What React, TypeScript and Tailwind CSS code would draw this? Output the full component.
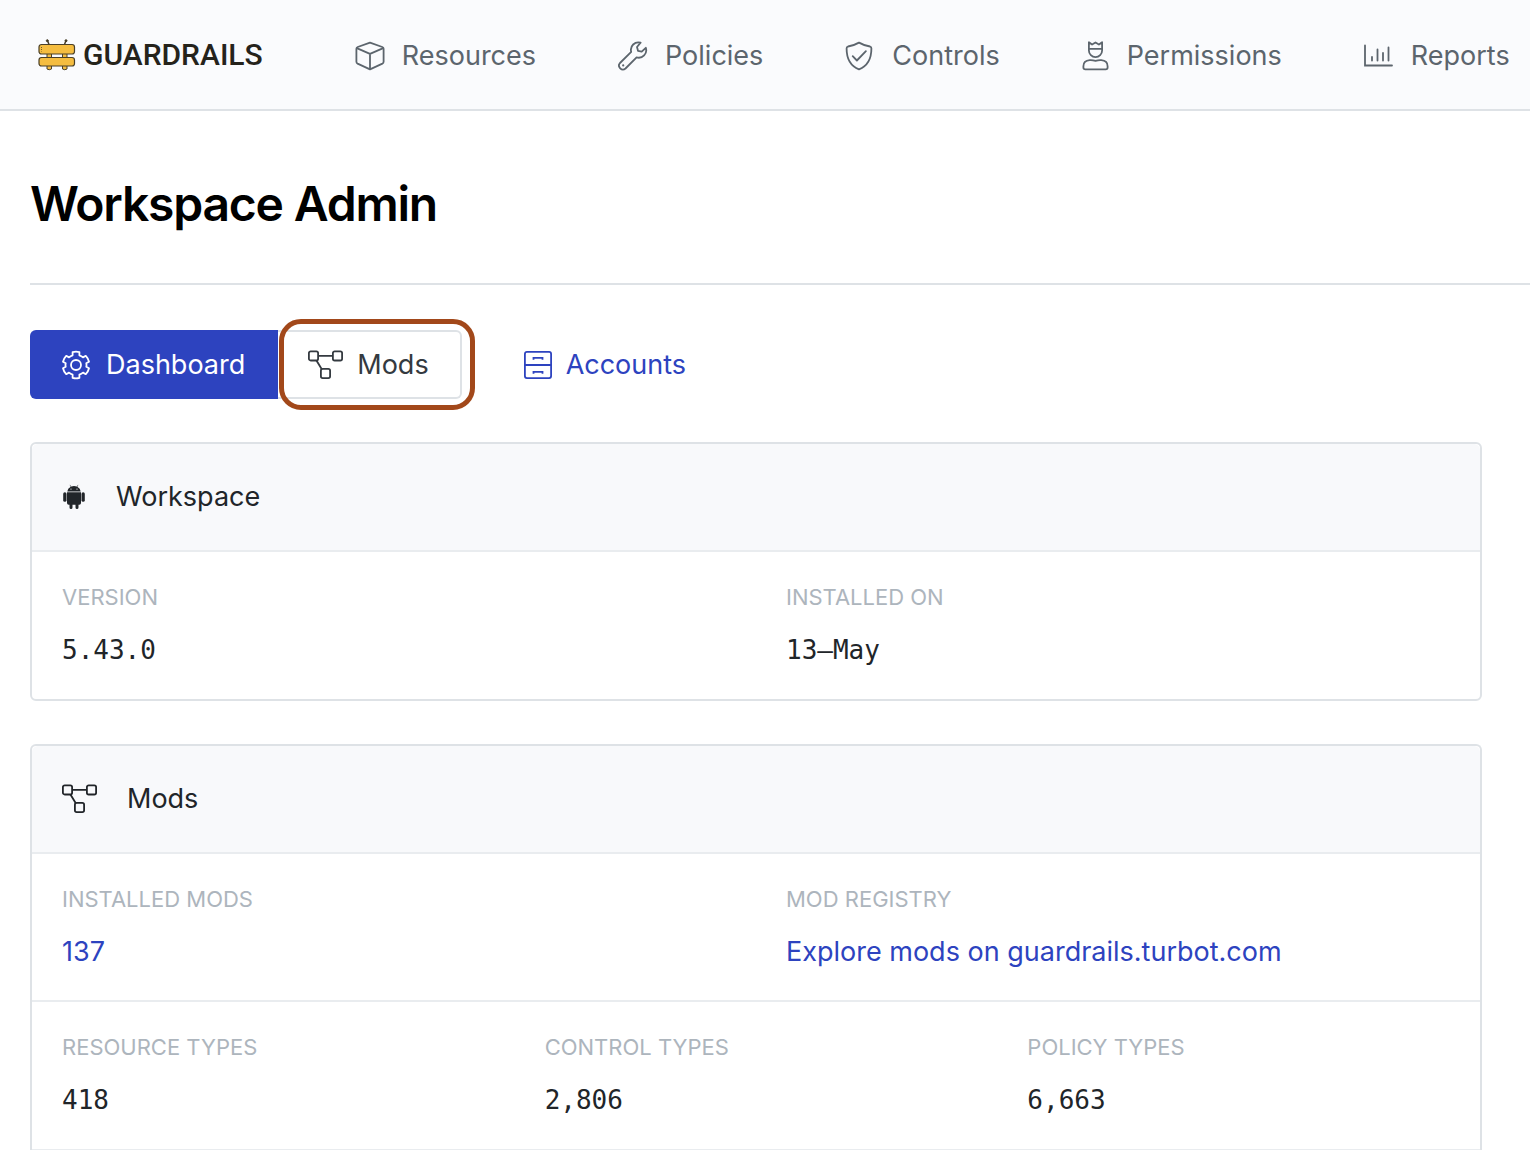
import type { ReactNode } from "react";

type IconProps = { className?: string };

function CubeIcon({ className }: IconProps) {
  return (
    <svg className={className} width="30" height="30" viewBox="0 0 30 30" fill="none" stroke="currentColor" strokeWidth="1.8" strokeLinejoin="round" aria-hidden="true">
      <path d="M15 1.6 27.3 6Q28.6 6.500 28.600 7.800V20.700Q28.600 22 27.400 22.600L15 28.400 2.600 22.600Q1.400 22 1.400 20.700V7.800Q1.400 6.500 2.700 6Z" />
      <path d="M1.800 7.200 15 12.800 28.200 7.200M15 12.800V28" />
    </svg>
  );
}

function WrenchIcon({ className }: IconProps) {
  return (
    <svg className={className} width="30" height="30" viewBox="0 0 30 30" fill="none" stroke="currentColor" strokeWidth="1.8" strokeLinejoin="round" aria-hidden="true">
      <path d="M22.600 1.700A7.500 7.500 0 0 0 13.200 10.900L2 22a3.900 3.900 0 0 0 5.500 5.500L18.600 16.400A7.500 7.500 0 0 0 27.800 6.800L23.700 10.700 20 9.800 19 6Z" />
      <circle cx="5.200" cy="24.400" r="1.100" fill="currentColor" stroke="none" />
    </svg>
  );
}

function ShieldIcon({ className }: IconProps) {
  return (
    <svg className={className} width="30" height="30" viewBox="0 0 30 30" fill="none" stroke="currentColor" strokeWidth="1.800" strokeLinecap="round" strokeLinejoin="round" aria-hidden="true">
      <path d="M14 1.600Q19.500 4.700 25 5.500Q26.500 6 26.400 7.500C26.400 18.500 22.500 25 14 28.300C5.500 25 1.600 18.500 1.600 7.500Q1.500 6 3 5.500Q8.500 4.700 14 1.600Z" />
      <path d="m7.700 15.200 4.200 4.300 9-9.300" />
    </svg>
  );
}

function CrownUserIcon({ className }: IconProps) {
  return (
    <svg className={className} width="28" height="30" viewBox="0 0 28 30" fill="none" stroke="currentColor" strokeWidth="1.800" strokeLinejoin="round" aria-hidden="true">
      <path d="M6.900 1.200V9.500a6.600 6.600 0 0 0 13.200 0V1.200L16.900 3.500 13.500 1.400 10.100 3.500ZM6.900 7.800H20.100" />
      <path d="M7.700 19.200Q10.500 19 13.500 19.900Q16.500 19 19.300 19.200C23.500 19.500 25.600 22 25.600 25.300V26.500Q25.600 28.400 23.700 28.400H3.300Q1.400 28.400 1.400 26.500V25.300C1.400 22 3.500 19.500 7.700 19.200Z" />
    </svg>
  );
}

function ChartIcon({ className }: IconProps) {
  return (
    <svg className={className} width="30" height="30" viewBox="0 0 30 30" fill="none" stroke="currentColor" strokeWidth="1.800" strokeLinecap="round" aria-hidden="true">
      <path d="M1 4.500V24.500H28M8 16V19.500M13.500 8.500V19.500M19 12V19.500M24.500 6.500V19.500" />
    </svg>
  );
}

function GearIcon({ className }: IconProps) {
  return (
    <svg className={className} width="28" height="30" viewBox="0 0 28 30" fill="none" stroke="currentColor" strokeWidth="1.800" strokeLinejoin="round" aria-hidden="true">
      <circle cx="14" cy="15" r="5" />
      <path d="M10.600 2.100Q14 1.100 17.400 2.100V5.300Q19.500 6 21 7.400L23.800 5.800Q26.300 8.400 27 11.700L24.300 13.300Q24.700 15 24.300 16.700L27 18.300Q26.300 21.600 23.800 24.200L21 22.600Q19.500 24 17.400 24.700V27.900Q14 28.900 10.600 27.900V24.700Q8.500 24 7 22.600L4.200 24.200Q1.700 21.600 1 18.300L3.700 16.700Q3.300 15 3.700 13.300L1 11.700Q1.700 8.400 4.200 5.800L7 7.400Q8.500 6 10.600 5.300Z" />
    </svg>
  );
}

function ModsIcon({ className }: IconProps) {
  return (
    <svg className={className} width="35" height="30" viewBox="0 0 35 30" fill="none" stroke="currentColor" strokeWidth="1.800" aria-hidden="true">
      <rect x=".9" y="1.300" width="9.200" height="9.200" rx="1.800" />
      <rect x="24.900" y="1.300" width="9.200" height="9.200" rx="1.800" />
      <rect x="12.900" y="18.900" width="9.200" height="9.200" rx="1.800" />
      <path d="M10.100 5.900H24.900M8.300 10.300 13.800 19.300" />
    </svg>
  );
}

function CabinetIcon({ className }: IconProps) {
  return (
    <svg className={className} width="28" height="30" viewBox="0 0 28 30" fill="none" stroke="currentColor" strokeWidth="1.800" aria-hidden="true">
      <rect x=".9" y="1.900" width="26.200" height="26.200" rx="2" />
      <path d="M1 15H27M9.500 9.800V7.800H18.500V9.800M9.500 23.800V21.800H18.500V23.800" />
    </svg>
  );
}

function AndroidIcon({ className }: IconProps) {
  return (
    <svg className={className} width="24" height="26" viewBox="0 0 24 26" fill="currentColor" aria-hidden="true">
      <path d="M5.300 7.500Q5.600 4.200 8.700 2.700L7.700 1 8 .8 9.100 2.500Q12 1.500 14.900 2.500L16 .8 16.300 1 15.300 2.700Q18.400 4.200 18.700 7.500ZM9 4.500a.6.600 0 1 0 0 1.200.6.600 0 0 0 0-1.200M15 4.500a.6.600 0 1 0 0 1.200.6.600 0 0 0 0-1.200" fillRule="evenodd" />
      <path d="M5 8.200H19V19Q19 20.700 17.300 20.700H16.500V23.600a1.500 1.500 0 0 1-3 0V20.700H10.500V23.600a1.500 1.500 0 0 1-3 0V20.700H6.700Q5 20.700 5 19Z" />
      <rect x="1.200" y="8.300" width="3.300" height="9.500" rx="1.600" />
      <rect x="19.500" y="8.300" width="3.300" height="9.500" rx="1.600" />
    </svg>
  );
}

function LogoMark() {
  return (
    <svg width="38" height="32" viewBox="0 0 38 32" stroke="#4a4029" strokeWidth="1" aria-hidden="true">
      <path d="m9.500 1.500 1.500 4M28 1.500 26.500 5.500" strokeWidth="1.500" fill="none" />
      <circle cx="9.300" cy="1.700" r="1" fill="#3b3525" />
      <circle cx="28" cy="1.700" r="1" fill="#3b3525" />
      <g fill="#f5bd40">
        <path d="M9 13H13.500V30Q11.200 31.500 9 30ZM24.500 13H29V30Q26.800 31.500 24.500 30Z" />
        <rect x="1" y="5.500" width="35.500" height="9.500" rx="2.500" strokeWidth="1.200" />
        <rect x="1" y="18.500" width="35.500" height="8.500" rx="2.500" strokeWidth="1.200" />
      </g>
      <path d="M3.500 8V12.500" strokeDasharray="1 1" strokeWidth=".8" />
    </svg>
  );
}

const navItems = [
  { label: "Resources", icon: <CubeIcon /> },
  { label: "Policies", icon: <WrenchIcon /> },
  { label: "Controls", icon: <ShieldIcon /> },
  { label: "Permissions", icon: <CrownUserIcon /> },
  { label: "Reports", icon: <ChartIcon /> },
];

function Card({ icon, title, open, children }: { icon: ReactNode; title: string; open?: boolean; children: ReactNode }) {
  return (
    <section className={open ? "rounded-t-md border-2 border-b-0 border-[#dee2e6]" : "rounded-md border-2 border-[#dee2e6]"}>
      <h2 className="flex items-center gap-[30px] rounded-t-md border-b-2 border-[#e9ecef] bg-[#f8f9fb] px-[30px] py-8 leading-[42px]">
        {icon}
        {title}
      </h2>
      {children}
    </section>
  );
}

function Field({ label, children }: { label: string; children: ReactNode }) {
  return (
    <div className="px-[30px] py-[27px]">
      <dt className="text-[22px] leading-9 text-[#adb5bd]">{label}</dt>
      <dd className="mt-[14px] leading-[42px]">{children}</dd>
    </div>
  );
}

const mono = "block font-['DejaVu_Sans_Mono',monospace] text-[26px] leading-[43px]";

export default function App() {
  return (
    <div className="overflow-x-hidden bg-white font-['Inter',sans-serif] text-[27px] text-[#212529]">
      <header className="flex items-center border-b-2 border-[#dee2e6] bg-[#fafbfd] pt-[33px] pb-8 pl-[38px] whitespace-nowrap">
        <a href="#home" className="mr-[92px] flex items-center gap-[7px] font-['Roboto',sans-serif] text-[30px] leading-[42px] font-medium text-[#25231b]">
          <LogoMark />
          GUARDRAILS
        </a>
        <nav className="flex gap-[82px] pt-0.5 text-[#5c656d]">
          {navItems.map((item) => (
            <a key={item.label} href={"#" + item.label.toLowerCase()} className="flex items-center gap-[17px] leading-[42px]">
              {item.icon}
              {item.label}
            </a>
          ))}
        </nav>
      </header>
      <main className="pl-[30px]">
        <h1 className="border-b-2 border-[#dee2e6] pt-[63px] pb-[49px] text-[48px] leading-[60px] font-semibold tracking-tight text-black">Workspace Admin</h1>
        <div className="mt-[45px] flex items-center">
          <button type="button" className="flex items-center gap-4 rounded-l-md bg-[#2d43bf] py-3 pr-[33px] pl-8 leading-[45px] text-white">
            <GearIcon />
            Dashboard
          </button>
          <div className="relative">
            <button type="button" className="flex items-center gap-[14px] rounded-r-md border-2 border-l-0 border-[#dee2e6] py-[10px] pr-[31px] pl-[30px] leading-[45px] text-[#343a40]">
              <ModsIcon />
              Mods
            </button>
            <span className="pointer-events-none absolute -top-[11px] -right-[13px] -bottom-[11px] left-px rounded-[22px] border-5 border-[#a2481a]" />
          </div>
          <button type="button" className="ml-[62px] flex items-center gap-[14px] leading-[45px] text-[#2d43bf]">
            <CabinetIcon />
            Accounts
          </button>
        </div>
        <div className="mt-[43px] mr-12 flex flex-col gap-[43px]">
          <Card icon={<AndroidIcon />} title="Workspace">
            <dl className="grid grid-cols-2">
              <Field label="VERSION"><span className={mono}>5.43.0</span></Field>
              <Field label="INSTALLED ON"><span className={mono}>13–May</span></Field>
            </dl>
          </Card>
          <Card icon={<ModsIcon />} title="Mods" open>
            <dl className="grid grid-cols-2 border-b-2 border-[#e9ecef]">
              <Field label="INSTALLED MODS"><a href="#installed" className="text-[#2d43bf]">137</a></Field>
              <Field label="MOD REGISTRY"><a href="#registry" className="text-[#2d43bf]">Explore mods on guardrails.turbot.com</a></Field>
            </dl>
            <dl className="grid grid-cols-3 border-b-2 border-[#e9ecef]">
              <Field label="RESOURCE TYPES"><span className={mono}>418</span></Field>
              <Field label="CONTROL TYPES"><span className={mono}>2,806</span></Field>
              <Field label="POLICY TYPES"><span className={mono}>6,663</span></Field>
            </dl>
          </Card>
        </div>
      </main>
    </div>
  );
}
